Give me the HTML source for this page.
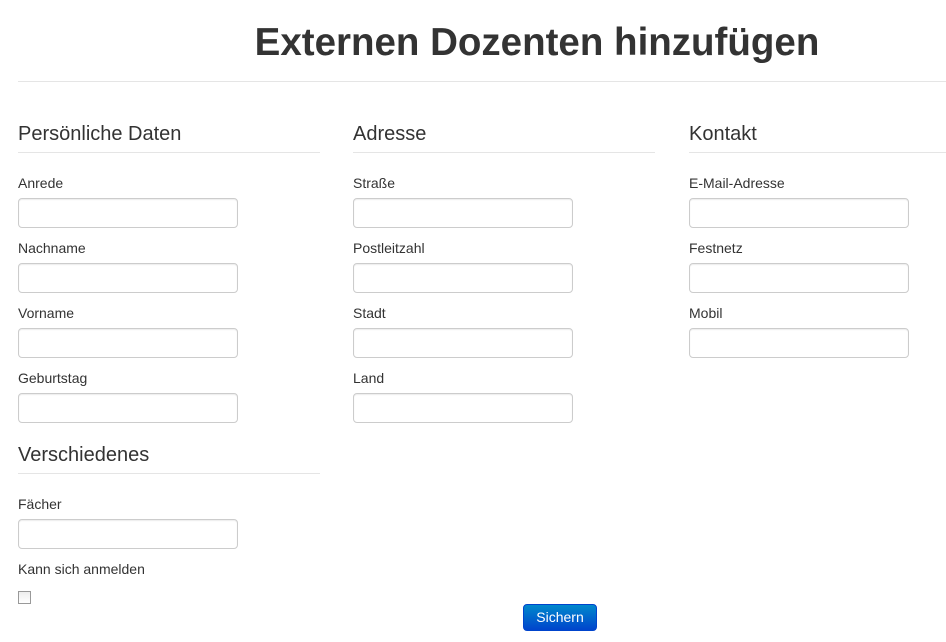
<!DOCTYPE html>
<html><head><meta charset="utf-8"><style>
body{margin:0;width:946px;height:642px;background:#fff;font-family:"Liberation Sans",sans-serif;color:#333;position:relative;overflow:hidden}
h1{position:absolute;margin:0;left:0;width:1074px;text-align:center;top:19px;font-size:38.5px;font-weight:bold;line-height:48px;color:#333}
.hr{position:absolute;height:1px;background:#e5e5e5}
.h{position:absolute;font-size:20px;line-height:24px;color:#333}
.l{position:absolute;font-size:14px;line-height:20px;color:#333}
.i{position:absolute;width:218px;height:28px;border:1px solid #ccc;border-radius:4px;box-shadow:inset 0 1px 1px rgba(0,0,0,.075)}
.cb{position:absolute;left:18px;top:591px;width:11px;height:11px;border:1px solid #999;background:linear-gradient(#eee,#fff)}
.btn{position:absolute;left:523px;top:604px;width:72px;height:25px;border:1px solid #04c;border-radius:4px;background:linear-gradient(#08c,#04c);color:#fff;font-size:14px;line-height:25px;text-align:center}
</style></head><body>
<h1>Externen Dozenten hinzufügen</h1>
<div class="hr" style="left:18px;top:81px;width:928px"></div>

<div class="h" style="left:18px;top:122px">Persönliche Daten</div>
<div class="hr" style="left:18px;top:152px;width:302px"></div>
<div class="l" style="left:18px;top:173px">Anrede</div><div class="i" style="left:18px;top:198px"></div>
<div class="l" style="left:18px;top:238px">Nachname</div><div class="i" style="left:18px;top:263px"></div>
<div class="l" style="left:18px;top:303px">Vorname</div><div class="i" style="left:18px;top:328px"></div>
<div class="l" style="left:18px;top:368px">Geburtstag</div><div class="i" style="left:18px;top:393px"></div>

<div class="h" style="left:18px;top:443px">Verschiedenes</div>
<div class="hr" style="left:18px;top:473px;width:302px"></div>
<div class="l" style="left:18px;top:494px">Fächer</div><div class="i" style="left:18px;top:519px"></div>
<div class="l" style="left:18px;top:559px">Kann sich anmelden</div>
<div class="cb"></div>

<div class="h" style="left:353px;top:122px">Adresse</div>
<div class="hr" style="left:353px;top:152px;width:302px"></div>
<div class="l" style="left:353px;top:173px">Straße</div><div class="i" style="left:353px;top:198px"></div>
<div class="l" style="left:353px;top:238px">Postleitzahl</div><div class="i" style="left:353px;top:263px"></div>
<div class="l" style="left:353px;top:303px">Stadt</div><div class="i" style="left:353px;top:328px"></div>
<div class="l" style="left:353px;top:368px">Land</div><div class="i" style="left:353px;top:393px"></div>

<div class="h" style="left:689px;top:122px">Kontakt</div>
<div class="hr" style="left:689px;top:152px;width:257px"></div>
<div class="l" style="left:689px;top:173px">E-Mail-Adresse</div><div class="i" style="left:689px;top:198px"></div>
<div class="l" style="left:689px;top:238px">Festnetz</div><div class="i" style="left:689px;top:263px"></div>
<div class="l" style="left:689px;top:303px">Mobil</div><div class="i" style="left:689px;top:328px"></div>

<div class="btn">Sichern</div>
</body></html>
